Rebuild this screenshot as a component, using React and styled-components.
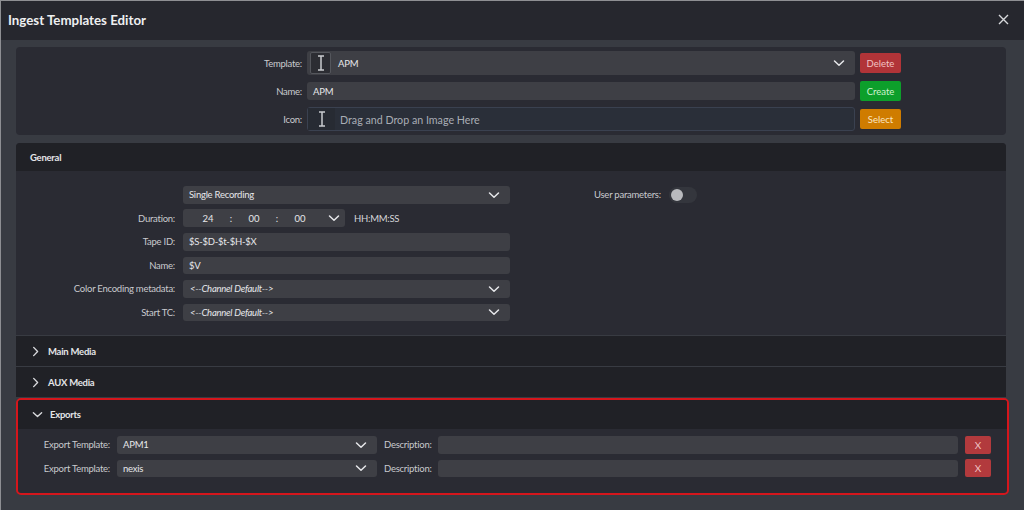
import React from "react";
import styled, { createGlobalStyle } from "styled-components";

const GlobalStyle = createGlobalStyle`
  html, body { margin: 0; padding: 0; background: #383b42; }
  body { font-family: Lato, "Open Sans", sans-serif; }
  * { box-sizing: border-box; }
`;

const Chevron = ({ dir = "down", size = 12 }) => (
  <svg width={size} height={size} viewBox="0 0 12 12" fill="none">
    {dir === "down" ? (
      <path d="M1.5 4 6 8.3 10.5 4" stroke="currentColor" strokeWidth="1.5" strokeLinecap="round" strokeLinejoin="round" />
    ) : (
      <path d="M4 1.5 8.3 6 4 10.5" stroke="currentColor" strokeWidth="1.5" strokeLinecap="round" strokeLinejoin="round" />
    )}
  </svg>
);

const IBeam = () => (
  <svg width="8" height="16" viewBox="0 0 8 16" fill="none">
    <path d="M1 1h6M1 15h6M4 1v14" stroke="#c9cbd0" strokeWidth="1.5" />
  </svg>
);

const App = () => {
  return (
    <>
      <GlobalStyle />
      <Window>
        <TitleBar>
          <Title>Ingest Templates Editor</Title>
          <Close>
            <svg width="11" height="11" viewBox="0 0 11 11">
              <path d="M1 1l9 9M10 1l-9 9" stroke="#d8d9dc" strokeWidth="1.4" />
            </svg>
          </Close>
        </TitleBar>
        <Body>
          <TopPanel>
            <TopLabel>Template:</TopLabel>
            <Select $tall>
              <IconSlot>
                <IBeam />
              </IconSlot>
              <SelectText>APM</SelectText>
              <Chevron />
            </Select>
            <Button $bg="#b13438" $fg="#f1c4c4">Delete</Button>

            <TopLabel>Name:</TopLabel>
            <Input>APM</Input>
            <Button $bg="#0d9f2b" $fg="#cdf3cf">Create</Button>

            <TopLabel>Icon:</TopLabel>
            <DropZone>
              <DropSlot>
                <IBeam />
              </DropSlot>
              <DropText>Drag and Drop an Image Here</DropText>
            </DropZone>
            <Button $bg="#cf7c00" $fg="#fbe6c2">Select</Button>
          </TopPanel>

          <Accordion>
            <Section>
              <SectionHeader $h={28}>
                <SectionTitle>General</SectionTitle>
              </SectionHeader>
              <GeneralBody>
                <FormGrid>
                  <span />
                  <Select>
                    <SelectText>Single Recording</SelectText>
                    <Chevron />
                  </Select>

                  <FormLabel>Duration:</FormLabel>
                  <DurationRow>
                    <DurationBox>
                      <TimePart>24</TimePart>
                      <Colon>:</Colon>
                      <TimePart>00</TimePart>
                      <Colon>:</Colon>
                      <TimePart>00</TimePart>
                      <Chevron />
                    </DurationBox>
                    <Hint>HH:MM:SS</Hint>
                  </DurationRow>

                  <FormLabel>Tape ID:</FormLabel>
                  <Input>$S-$D-$t-$H-$X</Input>

                  <FormLabel>Name:</FormLabel>
                  <Input>$V</Input>

                  <FormLabel>Color Encoding metadata:</FormLabel>
                  <Select>
                    <SelectText $italic>&lt;--Channel Default--&gt;</SelectText>
                    <Chevron />
                  </Select>

                  <FormLabel>Start TC:</FormLabel>
                  <Select>
                    <SelectText $italic>&lt;--Channel Default--&gt;</SelectText>
                    <Chevron />
                  </Select>
                </FormGrid>
                <UserParams>
                  <FormLabel>User parameters:</FormLabel>
                  <Toggle>
                    <Knob />
                  </Toggle>
                </UserParams>
              </GeneralBody>
            </Section>

            <Section>
              <SectionHeader $h={30}>
                <Chevron dir="right" size={11} />
                <SectionTitle>Main Media</SectionTitle>
              </SectionHeader>
            </Section>

            <Section>
              <SectionHeader $h={30}>
                <Chevron dir="right" size={11} />
                <SectionTitle>AUX Media</SectionTitle>
              </SectionHeader>
            </Section>

            <Exports>
              <SectionHeader $h={29}>
                <Chevron size={11} />
                <SectionTitle>Exports</SectionTitle>
              </SectionHeader>
              <ExportsBody>
                {["APM1", "nexis"].map((t) => (
                  <ExportRow key={t}>
                    <FormLabel>Export Template:</FormLabel>
                    <Select>
                      <SelectText>{t}</SelectText>
                      <Chevron />
                    </Select>
                    <DescLabel>Description:</DescLabel>
                    <Input />
                    <RemoveButton>X</RemoveButton>
                  </ExportRow>
                ))}
              </ExportsBody>
            </Exports>
          </Accordion>
        </Body>
      </Window>
    </>
  );
};

export default App;

const Window = styled.div`
  width: 1024px;
  height: 510px;
  overflow: hidden;
  border-top: 1px solid #8e8f93;
  border-left: 1px solid #8e8f93;
  background: #383b42;
  display: flex;
  flex-direction: column;
  color: #e4e5e7;
`;

const TitleBar = styled.div`
  height: 39px;
  flex: none;
  background: #26272e;
  display: flex;
  align-items: center;
  justify-content: space-between;
  padding: 0 15px 0 7px;
`;

const Title = styled.div`
  font-size: 13.3px;
  font-weight: 700;
  color: #eeeff1;
  margin-top: -2px;
`;

const Close = styled.div`
  display: flex;
  margin-top: -2px;
`;

const Body = styled.div`
  flex: 1;
  padding: 7px 18px 0 15px;
  display: flex;
  flex-direction: column;
  gap: 8px;
`;

const TopPanel = styled.div`
  background: #2a2b33;
  border-radius: 4px;
  padding: 4px 0;
  display: grid;
  grid-template-columns: 286px 548px 41px;
  column-gap: 5px;
  grid-template-rows: 24px 17px 24px;
  row-gap: 7.5px;
  align-items: center;
`;

const TopLabel = styled.div`
  text-align: right;
  font-size: 9.5px;
  letter-spacing: -0.25px;
  color: #c9cace;
`;

const Select = styled.div`
  height: ${(p) => (p.$tall ? "24px" : "17.5px")};
  background: #3e3f45;
  border-radius: 3px;
  display: flex;
  align-items: center;
  padding-right: 10px;
  color: #e6e7ea;
  min-width: 0;
`;

const IconSlot = styled.div`
  width: 21px;
  height: 22px;
  margin: 0 1px 0 3px;
  border: 1px solid #54565c;
  border-radius: 2px;
  background: #2c2d33;
  display: flex;
  align-items: center;
  justify-content: center;
`;

const SelectText = styled.div`
  flex: 1;
  padding-left: ${(p) => (p.$italic ? "7px" : "6px")};
  font-size: 9.5px;
  letter-spacing: -0.25px;
  font-style: ${(p) => (p.$italic ? "italic" : "normal")};
  color: #e6e7ea;
  white-space: nowrap;
`;

const Input = styled.div`
  height: 17.5px;
  background: #3e3f45;
  border-radius: 3px;
  display: flex;
  align-items: center;
  padding-left: 6px;
  font-size: 9.5px;
  letter-spacing: -0.25px;
  color: #e6e7ea;
`;

const DropZone = styled.div`
  height: 24px;
  background: #2a2f39;
  border: 1px solid #3a4150;
  border-radius: 3px;
  display: flex;
  align-items: center;
`;

const DropSlot = styled.div`
  width: 27px;
  height: 100%;
  background: #272b33;
  display: flex;
  align-items: center;
  justify-content: center;
`;

const DropText = styled.div`
  padding-left: 5px;
  font-size: 10.7px;
  color: #a9adb5;
`;

const Button = styled.div`
  height: 20px;
  background: ${(p) => p.$bg};
  color: ${(p) => p.$fg};
  border-radius: 2px;
  font-size: 9.5px;
  display: flex;
  align-items: center;
  justify-content: center;
`;

const Accordion = styled.div`
  display: flex;
  flex-direction: column;
  gap: 1px;
`;

const Section = styled.div`
  background: #2a2b33;
  &:first-child {
    border-radius: 4px 4px 0 0;
    overflow: hidden;
  }
`;

const SectionHeader = styled.div`
  height: ${(p) => p.$h}px;
  background: #202126;
  display: flex;
  align-items: center;
  gap: 7px;
  padding-left: 14px;
  color: #d9dadd;
`;

const SectionTitle = styled.div`
  font-size: 9.5px;
  letter-spacing: -0.25px;
  font-weight: 700;
  color: #e4e5e8;
`;

const GeneralBody = styled.div`
  display: flex;
  align-items: flex-start;
  padding: 15px 0 14px;
`;

const FormGrid = styled.div`
  display: grid;
  grid-template-columns: 159px 327px;
  column-gap: 8px;
  row-gap: 6px;
  grid-auto-rows: 17.5px;
  align-items: center;
`;

const FormLabel = styled.div`
  text-align: right;
  font-size: 9.5px;
  letter-spacing: -0.25px;
  color: #c9cace;
  white-space: nowrap;
`;

const DurationRow = styled.div`
  display: flex;
  align-items: center;
  gap: 9px;
`;

const DurationBox = styled.div`
  width: 162px;
  height: 18px;
  background: #3e3f45;
  border-radius: 3px;
  display: flex;
  align-items: center;
  padding-left: 11px;
  font-size: 9.5px;
  color: #e6e7ea;
  & svg {
    margin-left: 14px;
  }
`;

const TimePart = styled.span`
  width: 28px;
  text-align: center;
`;

const Colon = styled.span`
  width: 18px;
  text-align: center;
`;

const Hint = styled.span`
  font-size: 9.5px;
  letter-spacing: -0.25px;
  color: #d6d7da;
`;

const UserParams = styled.div`
  margin-left: 84px;
  height: 17.5px;
  display: flex;
  align-items: center;
  gap: 8px;
`;

const Toggle = styled.div`
  width: 28px;
  height: 16px;
  border-radius: 8px;
  background: #34363d;
  display: flex;
  align-items: center;
  padding-left: 2px;
`;

const Knob = styled.div`
  width: 12px;
  height: 12px;
  border-radius: 50%;
  background: #b9babe;
`;

const Exports = styled.div`
  background: #2a2b33;
  border: 2px solid #d5161c;
  border-radius: 5px;
  margin: 0 -3px 0 0;
  overflow: hidden;
`;

const ExportsBody = styled.div`
  padding: 7px 0 16px;
  display: flex;
  flex-direction: column;
  gap: 6px;
`;

const ExportRow = styled.div`
  display: grid;
  grid-template-columns: 92px 260px 47px 520px 26px;
  column-gap: 7px;
  grid-auto-rows: 17.5px;
  align-items: center;
`;

const DescLabel = styled.div`
  font-size: 9.5px;
  letter-spacing: -0.25px;
  color: #c9cace;
  white-space: nowrap;
`;

const RemoveButton = styled.div`
  height: 18px;
  background: #b23a3d;
  border-radius: 2px;
  color: #f0c3c3;
  font-size: 10px;
  display: flex;
  align-items: center;
  justify-content: center;
`;
